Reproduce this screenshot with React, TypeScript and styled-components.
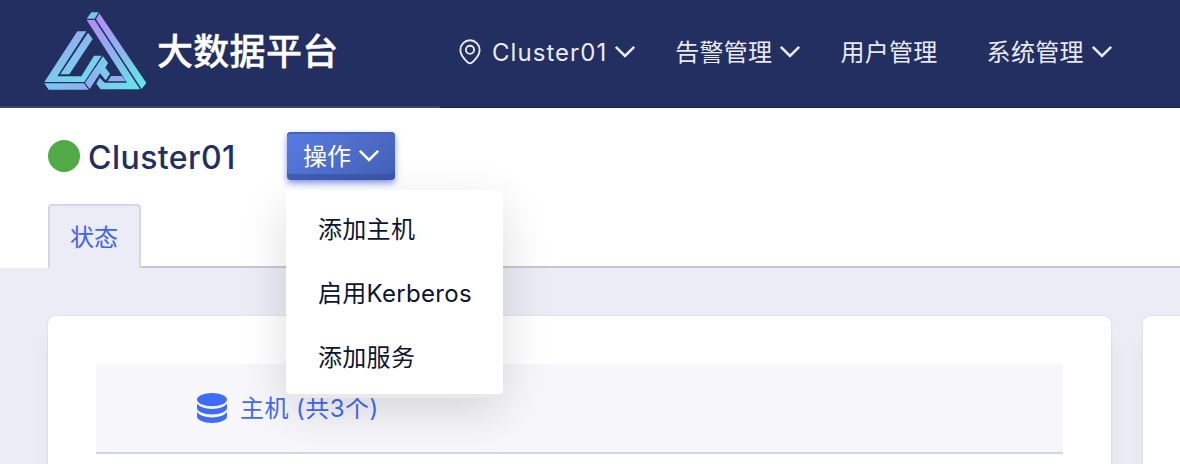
import React from "react";
import styled, { createGlobalStyle } from "styled-components";

const GlobalStyle = createGlobalStyle`
  * { box-sizing: border-box; }
  html, body { margin: 0; }
  body {
    width: 1180px;
    height: 464px;
    overflow: hidden;
    background: #ebecf5;
    font-family: Inter, "Noto Sans CJK SC", sans-serif;
    font-size: 24px;
    line-height: 36px;
    white-space: nowrap;
  }
`;

const Page = styled.div`
  height: 464px;
  overflow: hidden;
  display: flex;
  flex-direction: column;
`;

const Header = styled.header`
  flex: none;
  height: 108px;
  display: flex;
  background: #222f60;
  border-bottom: 1px solid #1d2955;
`;

const Brand = styled.div`
  width: 440px;
  height: 108px;
  padding: 10px 0 0 42px;
  display: flex;
  align-items: flex-start;
  border-bottom: 2px solid #3a4672;
`;

const BrandName = styled.h1`
  margin: 16px 0 0 9px;
  font-size: 36px;
  line-height: 52px;
  font-weight: 500;
  letter-spacing: 0.3px;
  color: #fff;
  -webkit-text-stroke: 0.4px #fff;
`;

const Nav = styled.nav`
  display: flex;
  align-items: center;
  height: 104px;
  padding-left: 19px;
`;

const NavItem = styled.a<{ $gap: number }>`
  display: flex;
  align-items: center;
  margin-right: ${(p) => p.$gap}px;
  color: #e9eaef;
`;

const NavText = styled.span`
  padding-top: 2px;
  letter-spacing: 0.3px;
`;

const NavLatin = styled.span`
  margin-left: 11px;
  padding-top: 2px;
  letter-spacing: 1.05px;
`;

const Arrow = styled.svg<{ $left: number }>`
  display: block;
  margin-left: ${(p) => p.$left}px;
  fill: none;
  stroke: currentColor;
  stroke-width: 2.6;
`;

const Subheader = styled.section`
  flex: none;
  height: 160px;
  background: #fff;
  display: flex;
  flex-direction: column;
  justify-content: space-between;
`;

const TitleRow = styled.div`
  display: flex;
  align-items: center;
  height: 48px;
  margin-top: 24px;
  padding-left: 48px;
`;

const StatusDot = styled.span`
  width: 32px;
  height: 32px;
  border-radius: 50%;
  background: #50aa45;
`;

const ClusterName = styled.h2`
  width: 207px;
  margin: 3px 0 0;
  padding-left: 8px;
  font-size: 32px;
  line-height: 48px;
  font-weight: 500;
  letter-spacing: 0.45px;
  color: #222f60;
`;

const ActionWrap = styled.div`
  position: relative;
  width: 108px;
  height: 48px;
`;

const ActionButton = styled.button`
  width: 108px;
  height: 48px;
  margin: 0;
  padding: 0 0 0 16px;
  display: flex;
  align-items: center;
  border: 0;
  border-radius: 4px;
  color: #fff;
  font: inherit;
  background: linear-gradient(135deg, #597be1, #4460b5);
  box-shadow: inset 0 2px 0 #4763b6, inset 0 -6px 0 rgba(51, 77, 153, 0.55),
    0 3px 6px rgba(70, 90, 220, 0.65);
`;

const ActionLabel = styled.span`
  padding-top: 2px;
`;

const Menu = styled.ul`
  position: absolute;
  z-index: 2;
  top: 58px;
  left: -1px;
  width: 217px;
  height: 204px;
  margin: 0;
  padding: 8px 0;
  list-style: none;
  border-radius: 4px;
  background: #fff;
  box-shadow: 0 4px 0 #e9e9ea, 0 16px 48px rgba(0, 0, 0, 0.14);
`;

const MenuItem = styled.li`
  height: 64px;
  padding-left: 32px;
  line-height: 64px;
  color: #0b1533;
  letter-spacing: 0.3px;
`;

const Tabs = styled.div`
  display: flex;
  height: 64px;
`;

const TabEdge = styled.div<{ $width?: number }>`
  flex: ${(p) => (p.$width ? `0 0 ${p.$width}px` : "1")};
  border-bottom: ${(p) => (p.$width ? "0" : "2px solid #c2cad9")};
`;

const Tab = styled.div`
  width: 93px;
  height: 64px;
  padding-left: 20px;
  line-height: 63px;
  border: 2px solid #d4d6e9;
  border-bottom: 0;
  border-radius: 4px 4px 0 0;
  background: #ebecf5;
  color: #4263f0;
`;

const Content = styled.main`
  flex: none;
  display: flex;
  gap: 32px;
  padding: 48px 0 0 48px;
`;

const Card = styled.section<{ $width: number }>`
  flex: none;
  width: ${(p) => p.$width}px;
  height: 300px;
  padding: 48px;
  border-radius: 8px;
  background: #fff;
  box-shadow: 0 0 2px rgba(30, 40, 70, 0.16), 0 24px 20px rgba(60, 60, 70, 0.05);
`;

const HostHeader = styled.div`
  width: 967px;
  height: 90px;
  display: flex;
  align-items: center;
  padding-left: 101px;
  background: #f6f6fb;
  border-bottom: 2px solid #d2d5e9;
  color: #426bf2;
`;

const HostLabel = styled.span`
  margin: 0 0 0 13px;
  padding-top: 2px;
  letter-spacing: 0.45px;
`;

const Chevron = ({ left }: { left: number }) => (
  <Arrow $left={left} width="22" height="14" viewBox="0 0 22 14">
    <path d="M1.8 1.8 11 11 20.2 1.8" />
  </Arrow>
);

const Logo = () => (
  <svg width="106" height="82" viewBox="36 30 318 246">
    <defs>
      <linearGradient id="left" gradientUnits="userSpaceOnUse" x1="110" y1="110" x2="180" y2="245">
        <stop offset="0" stopColor="#91aef0" />
        <stop offset="1" stopColor="#70dceb" />
      </linearGradient>
      <linearGradient id="right" gradientUnits="userSpaceOnUse" x1="185" y1="60" x2="330" y2="265">
        <stop offset="0" stopColor="#b48df7" />
        <stop offset="0.5" stopColor="#8cb5f0" />
        <stop offset="1" stopColor="#62e9e9" />
      </linearGradient>
      <linearGradient id="base" gradientUnits="userSpaceOnUse" x1="44" y1="250" x2="235" y2="190">
        <stop offset="0" stopColor="#76c8ee" />
        <stop offset="0.65" stopColor="#91adf3" />
        <stop offset="1" stopColor="#74d3ec" />
      </linearGradient>
    </defs>
    <path fill="#76c8ee" d="M184 37h22l-12 19h-24z" />
    <path fill="url(#right)" d="M170 60h24l136 208H212l-13-17 10-18 15 15h67z" />
    <path fill="url(#right)" d="M208 40 349 249l-14 18L198 58z" />
    <path fill="url(#left)" d="M142 94h27L82 229h72l38-62h23l-52 79H43z" />
    <path fill="url(#left)" d="m174 98 14 19-70 106H91z" />
    <path fill="url(#base)" d="M43 250h119l14 19H56z" />
    <path fill="url(#base)" d="m219 169 15 20-8 14 14 18-13 20-17-21-31 47-14-19z" />
    <path fill="#91acef" d="M243 228h33l12 16h-55z" />
  </svg>
);

const Pin = () => (
  <svg width="22" height="26" viewBox="0 0 22 26" fill="none" stroke="currentColor" strokeWidth="1.9">
    <path d="M11 24.3C9.4 24.3 1.4 17.5 1.4 10.9a9.6 9.6 0 0 1 19.2 0c0 6.6-8 13.4-9.6 13.4Z" />
    <circle cx="11" cy="10.8" r="4.1" />
  </svg>
);

const Database = () => (
  <svg width="30" height="30" viewBox="0 0 30 30" fill="#3e6cf6">
    <ellipse cx="15" cy="6.6" rx="15" ry="6.6" />
    <path d="M0 10.6c2.5 3.5 8 5.3 15 5.3s12.5-1.8 15-5.3v4.2c0 3.8-6.700 6.700-15 6.700S0 18.600 0 14.800z" />
    <path d="M0 19.100c2.500 3.500 8 5.300 15 5.300s12.500-1.800 15-5.300v4.200c0 3.800-6.700 6.700-15 6.700S0 27.100 0 23.300z" />
  </svg>
);

const menuItems = ["添加主机", "启用Kerberos", "添加服务"];

export default function App() {
  return (
    <Page>
      <GlobalStyle />
      <Header>
        <Brand>
          <Logo />
          <BrandName>大数据平台</BrandName>
        </Brand>
        <Nav>
          <NavItem $gap={39}>
            <Pin />
            <NavLatin>Cluster01</NavLatin>
            <Chevron left={7} />
          </NavItem>
          <NavItem $gap={39}>
            <NavText>告警管理</NavText>
            <Chevron left={7} />
          </NavItem>
          <NavItem $gap={49}>
            <NavText>用户管理</NavText>
          </NavItem>
          <NavItem $gap={0}>
            <NavText>系统管理</NavText>
            <Chevron left={7} />
          </NavItem>
        </Nav>
      </Header>
      <Subheader>
        <TitleRow>
          <StatusDot />
          <ClusterName>Cluster01</ClusterName>
          <ActionWrap>
            <ActionButton>
              <ActionLabel>操作</ActionLabel>
              <Chevron left={7} />
            </ActionButton>
            <Menu>
              {menuItems.map((item) => (
                <MenuItem key={item}>{item}</MenuItem>
              ))}
            </Menu>
          </ActionWrap>
        </TitleRow>
        <Tabs>
          <TabEdge $width={48} />
          <Tab>状态</Tab>
          <TabEdge />
        </Tabs>
      </Subheader>
      <Content>
        <Card $width={1063}>
          <HostHeader>
            <Database />
            <HostLabel>主机 (共3个)</HostLabel>
          </HostHeader>
        </Card>
        <Card $width={400} />
      </Content>
    </Page>
  );
}
